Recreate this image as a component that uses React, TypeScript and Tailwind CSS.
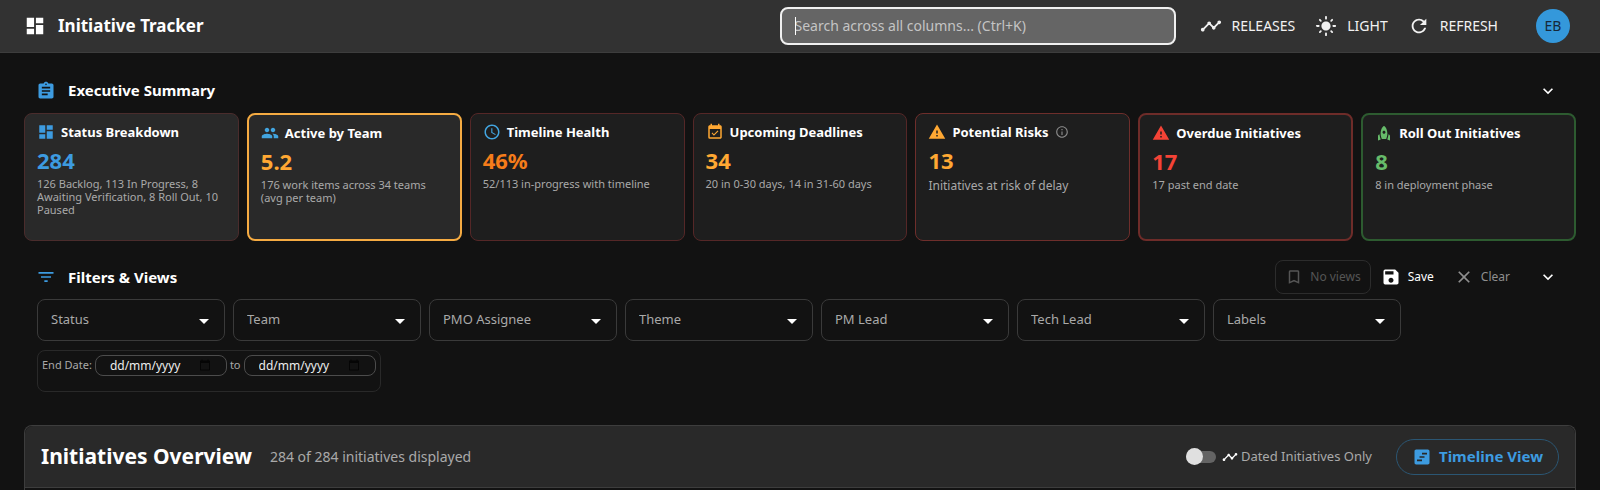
import type { ReactNode } from 'react'
import clsx from 'clsx'
import {
  MdAccessTime,
  MdArrowDropDown,
  MdAssignment,
  MdBookmarkBorder,
  MdCalendarToday,
  MdClear,
  MdDashboard,
  MdEventAvailable,
  MdExpandMore,
  MdFilterList,
  MdInfoOutline,
  MdLightMode,
  MdPeople,
  MdRefresh,
  MdRocket,
  MdSave,
  MdTimeline,
  MdViewTimeline,
  MdWarning,
} from 'react-icons/md'

type Card = {
  title: string
  value: string
  detail: string
  icon: ReactNode
  valueClass: string
  boxClass: string
  detailClass?: string
  info?: boolean
}

const cards: Card[] = [
  {
    title: 'Status Breakdown',
    value: '284',
    detail: '126 Backlog, 113 In Progress, 8 Awaiting Verification, 8 Roll Out, 10 Paused',
    icon: <MdDashboard className="size-[18px] text-[#3d9be0]" aria-hidden />,
    valueClass: 'text-[#3d9be0]',
    boxClass: 'border border-[#4a2c2c] bg-[#292929]',
  },
  {
    title: 'Active by Team',
    value: '5.2',
    detail: '176 work items across 34 teams (avg per team)',
    icon: <MdPeople className="size-[18px] text-[#42a5e0]" aria-hidden />,
    valueClass: 'text-[#ffa833]',
    boxClass: 'border-2 border-[#f5ab42] bg-[#292929]',
  },
  {
    title: 'Timeline Health',
    value: '46%',
    detail: '52/113 in-progress with timeline',
    icon: <MdAccessTime className="size-[18px] text-[#42a5e0]" aria-hidden />,
    valueClass: 'text-[#f57c1a]',
    boxClass: 'border border-[#552727] bg-[#1e1e1e]',
  },
  {
    title: 'Upcoming Deadlines',
    value: '34',
    detail: '20 in 0-30 days, 14 in 31-60 days',
    icon: <MdEventAvailable className="size-[18px] text-[#ffa833]" aria-hidden />,
    valueClass: 'text-[#ffa833]',
    boxClass: 'border border-[#552727] bg-[#1e1e1e]',
  },
  {
    title: 'Potential Risks',
    value: '13',
    detail: 'Initiatives at risk of delay',
    icon: <MdWarning className="size-[18px] text-[#ffa833]" aria-hidden />,
    valueClass: 'text-[#ffa833]',
    boxClass: 'border border-[#6e2e2b] bg-[#1e1e1e]',
    detailClass: 'mt-0.5 text-[12px]',
    info: true,
  },
  {
    title: 'Overdue Initiatives',
    value: '17',
    detail: '17 past end date',
    icon: <MdWarning className="size-[18px] text-[#f44336]" aria-hidden />,
    valueClass: 'text-[#f44336]',
    boxClass: 'border-2 border-[#6e2c29] bg-[#1e1e1e]',
  },
  {
    title: 'Roll Out Initiatives',
    value: '8',
    detail: '8 in deployment phase',
    icon: <MdRocket className="size-[18px] text-[#66bb6a]" aria-hidden />,
    valueClass: 'text-[#66bb6a]',
    boxClass: 'border-2 border-[#2d5b30] bg-[#1e1e1e]',
  },
]

const filters = ['Status', 'Team', 'PMO Assignee', 'Theme', 'PM Lead', 'Tech Lead', 'Labels']

function SummaryCard({ card }: { card: Card }) {
  return (
    <article className={clsx('min-h-32 rounded-lg px-3 py-[7px]', card.boxClass)}>
      <div className="flex items-center gap-1.5">
        {card.icon}
        <h3 className="text-[13px] leading-[22px] font-bold whitespace-nowrap text-white">{card.title}</h3>
        {card.info && <MdInfoOutline className="size-3.5 text-[#8a8a8a]" aria-hidden />}
      </div>
      <p className={clsx('text-[22px] leading-[34px] font-bold', card.valueClass)}>{card.value}</p>
      <p className={clsx('leading-[13px] text-[#a9a9a9]', card.detailClass ?? 'text-[11px]')}>{card.detail}</p>
    </article>
  )
}

function FilterSelect({ label }: { label: string }) {
  return (
    <div className="relative w-[188px]">
      <select
        aria-label={label}
        defaultValue=""
        className="block h-[42px] w-full appearance-none rounded-lg border border-[#3a3a3a] bg-[#121212] px-[13px] text-[13px] text-[#a9a9a9]"
      >
        <option value="">{label}</option>
      </select>
      <MdArrowDropDown className="pointer-events-none absolute top-2.5 right-[9px] size-6 text-white" aria-hidden />
    </div>
  )
}

function DateField({ label }: { label: string }) {
  return (
    <div className="relative w-[132px]">
      <input
        type="text"
        aria-label={label}
        placeholder="dd/mm/yyyy"
        className="block h-[21px] w-full rounded-lg border border-[#4c4c4c] bg-transparent pl-3.5 text-xs text-white placeholder:text-[#ececec]"
      />
      <MdCalendarToday className="pointer-events-none absolute top-1 right-4 size-3 text-[#050505]" aria-hidden />
    </div>
  )
}

function NavButton({ icon, children }: { icon: ReactNode; children: ReactNode }) {
  return (
    <button type="button" className="flex items-center gap-2.5 text-sm text-[#f2f2f2]">
      {icon}
      {children}
    </button>
  )
}

export default function App() {
  return (
    <div className="min-h-screen bg-[#121212] font-['Noto_Sans',sans-serif] text-white">
      <header className="flex h-[53px] items-center border-b border-[#3d3d3d] bg-[#323232] pr-[30px] pb-px pl-6">
        <MdDashboard className="size-[22px]" aria-hidden />
        <h1 className="ml-3 text-[17px] font-bold">Initiative Tracker</h1>
        <div className="relative ml-auto w-[396px]">
          <input
            type="search"
            autoFocus
            aria-label="Search"
            placeholder="Search across all columns... (Ctrl+K)"
            className="peer block h-[38px] w-full rounded-lg border-2 border-[#f0f0f0] bg-[#656565] px-[13px] text-sm caret-transparent outline-none placeholder:text-[#c4c4c4] focus:not-placeholder-shown:caret-white"
          />
          <span className="pointer-events-none absolute top-2.5 left-[15px] hidden h-[18px] w-px bg-white peer-placeholder-shown:block" />
        </div>
        <nav className="ml-6 flex items-center gap-5">
          <NavButton icon={<MdTimeline className="size-[22px]" aria-hidden />}>RELEASES</NavButton>
          <NavButton icon={<MdLightMode className="size-[22px]" aria-hidden />}>LIGHT</NavButton>
          <NavButton icon={<MdRefresh className="size-[22px]" aria-hidden />}>REFRESH</NavButton>
        </nav>
        <span className="ml-[38px] flex size-[34px] items-center justify-center rounded-full bg-[#3498db] text-sm text-[#16283a]">
          EB
        </span>
      </header>

      <main className="px-6 pt-[18px]">
        <section>
          <div className="flex h-[42px] items-center pr-[18px] pb-[3px] pl-3">
            <MdAssignment className="size-5 text-[#3d9be0]" aria-hidden />
            <h2 className="ml-3 text-[15px] font-bold">Executive Summary</h2>
            <button type="button" aria-label="Collapse summary" className="ml-auto">
              <MdExpandMore className="size-5" aria-hidden />
            </button>
          </div>
          <div className="grid grid-cols-7 gap-2">
            {cards.map((card) => (
              <SummaryCard key={card.title} card={card} />
            ))}
          </div>
        </section>

        <section className="pt-[19px]">
          <div className="flex h-[34px] items-center pr-[18px] pl-3">
            <MdFilterList className="size-5 text-[#3d9be0]" aria-hidden />
            <h2 className="ml-3 text-[15px] font-bold">Filters &amp; Views</h2>
            <div className="ml-auto flex items-center text-[12px]">
              <button
                type="button"
                disabled
                className="flex h-[34px] items-center gap-[7px] rounded-lg border border-[#2c2c2c] px-[9px] text-[#555]"
              >
                <MdBookmarkBorder className="size-[18px]" aria-hidden />
                No views
              </button>
              <button type="button" className="ml-2.5 flex items-center gap-[7px]">
                <MdSave className="size-5" aria-hidden />
                Save
              </button>
              <button type="button" className="ml-5 flex items-center gap-[7px] text-[#8f8f8f]">
                <MdClear className="size-5" aria-hidden />
                Clear
              </button>
            </div>
            <button type="button" aria-label="Collapse filters" className="ml-7">
              <MdExpandMore className="size-5" aria-hidden />
            </button>
          </div>
          <div className="flex flex-wrap gap-2 px-[13px] pt-[5px]">
            {filters.map((label) => (
              <FilterSelect key={label} label={label} />
            ))}
          </div>
          <div className="mt-[9px] ml-[13px] flex h-[42px] w-fit items-start gap-[3px] rounded-lg border border-[#292929] p-1">
            <span className="text-[11px] leading-5 text-[#a9a9a9]">End Date:</span>
            <DateField label="End date from" />
            <span className="text-[11px] leading-5 text-[#a9a9a9]">to</span>
            <DateField label="End date to" />
          </div>
        </section>

        <section className="mt-[33px] rounded-t-lg border border-b-0 border-[#3d3d3d]">
          <div className="flex h-[62px] items-center rounded-t-lg border-b border-[#3d3d3d] bg-[#292929] px-4">
            <h2 className="text-[21px] font-bold">Initiatives Overview</h2>
            <p className="ml-[18px] text-sm text-[#a9a9a9]">284 of 284 initiatives displayed</p>
            <label className="ml-auto flex items-center text-[13px] text-[#a9a9a9]">
              <input type="checkbox" role="switch" className="peer sr-only" />
              <span className="flex h-3 w-[30px] items-center rounded-full bg-[#646464] peer-checked:justify-end peer-checked:bg-[#3498db]">
                <span className="size-[17px] shrink-0 rounded-full bg-[#e0e0e0]" />
              </span>
              <MdTimeline className="mr-[3px] ml-1.5 size-4 text-white" aria-hidden />
              Dated Initiatives Only
            </label>
            <button
              type="button"
              className="ml-6 flex h-9 items-center gap-[7px] rounded-full border border-[#2b5673] px-[15px] text-[15px] font-bold text-[#3d9be0]"
            >
              <MdViewTimeline className="size-5" aria-hidden />
              Timeline View
            </button>
          </div>
          <div className="h-1" />
        </section>
      </main>
    </div>
  )
}
